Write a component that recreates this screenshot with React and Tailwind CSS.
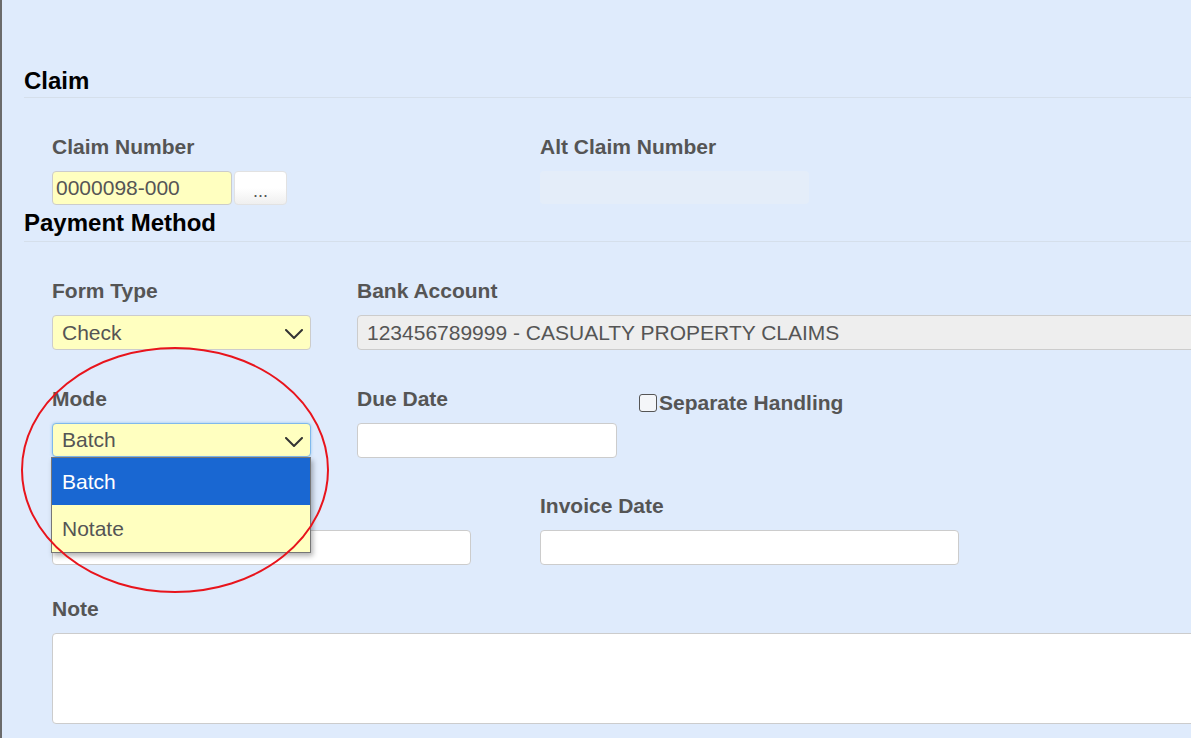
import React from "react";

const Chevron = () => (
  <svg width="18" height="10" viewBox="0 0 18 10" className="absolute right-[7px] top-[13px]" fill="none">
    <polyline points="1,1 9,9 17,1" stroke="#333" strokeWidth="2" strokeLinecap="round" strokeLinejoin="round" />
  </svg>
);

const Label = ({ children, className = "" }) => (
  <div className={"text-[21px] leading-[21px] font-bold text-[#555] mb-[14px] whitespace-nowrap " + className}>{children}</div>
);

export default function App() {
  return (
    <div
      className="relative h-[738px] w-full overflow-hidden bg-[#dfebfc] border-l-2 border-[#6b6b6b]"
      style={{ fontFamily: '"Liberation Sans", Arial, sans-serif' }}
    >
      <div className="w-[1500px] pl-[22px] pt-[69px]">
        {/* Claim heading */}
        <div className="text-[24px] leading-[24px] font-bold text-black pb-[4px] border-b border-[#d5dfeb]">Claim</div>

        {/* Claim row */}
        <div className="flex pl-[28px] mt-[38px]">
          <div className="w-[488px]">
            <Label>Claim Number</Label>
            <div className="flex gap-[2px]">
              <div className="w-[180px] h-[34px] rounded-[4px] border border-[#cccccc] bg-[#ffffc0] text-[21px] leading-[32px] text-[#555] pl-[3px]">0000098-000</div>
              <div className="w-[53px] h-[34px] rounded-[4px] border border-[#e2e2e2] bg-gradient-to-b from-white from-50% to-[#efefef] text-[18px] leading-[38px] text-[#555] text-center">...</div>
            </div>
          </div>
          <div>
            <Label>Alt Claim Number</Label>
            <div className="w-[269px] h-[33px] rounded-[4px] bg-[#e4edf9]"></div>
          </div>
        </div>

        {/* Payment Method heading */}
        <div className="mt-[6px] text-[24px] leading-[24px] font-bold text-black pb-[6px] border-b border-[#d5dfeb]">Payment Method</div>

        {/* Form Type / Bank Account */}
        <div className="flex pl-[28px] mt-[38px]">
          <div className="w-[305px]">
            <Label>Form Type</Label>
            <div className="relative w-[259px] h-[35px] rounded-[4px] border border-[#cccccc] bg-[#ffffc0] text-[21px] leading-[33px] text-[#555] pl-[9px]">
              Check
              <Chevron />
            </div>
          </div>
          <div>
            <Label>Bank Account</Label>
            <div className="w-[1000px] h-[35px] rounded-[4px] border border-[#cccccc] bg-[#eeeeee] text-[21px] leading-[33px] text-[#555] pl-[9px] whitespace-nowrap">
              123456789999 - CASUALTY PROPERTY CLAIMS
            </div>
          </div>
        </div>

        {/* Mode / Due Date / Separate Handling */}
        <div className="flex pl-[28px] mt-[38px]">
          <div className="w-[305px] relative">
            <Label>Mode</Label>
            <div className="relative w-[259px] h-[34px] rounded-[4px] border border-[#7fb8ec] bg-[#ffffc0] text-[21px] leading-[32px] text-[#555] pl-[9px] shadow-[0_0_3px_rgba(102,175,233,0.6)]">
              Batch
              <Chevron />
            </div>
          </div>
          <div className="w-[282px]">
            <Label>Due Date</Label>
            <div className="w-[260px] h-[35px] rounded-[4px] border border-[#cccccc] bg-white"></div>
          </div>
          <div className="flex items-center h-[21px] mt-[4px]">
            <span className="w-[18px] h-[18px] rounded-[3px] border border-[#555] bg-[#f4f6f9] mr-[2px] shrink-0"></span>
            <span className="text-[21px] leading-[21px] font-bold text-[#555] whitespace-nowrap">Separate Handling</span>
          </div>
        </div>

        {/* Invoice Number / Invoice Date */}
        <div className="flex pl-[28px] mt-[37px]">
          <div className="w-[488px]">
            <Label>Invoice Number</Label>
            <div className="w-[419px] h-[35px] rounded-[4px] border border-[#cccccc] bg-white"></div>
          </div>
          <div>
            <Label>Invoice Date</Label>
            <div className="w-[419px] h-[35px] rounded-[4px] border border-[#cccccc] bg-white"></div>
          </div>
        </div>

        {/* Note */}
        <div className="pl-[28px] mt-[33px]">
          <Label>Note</Label>
          <div className="w-[1300px] h-[91px] rounded-[4px] border border-[#cccccc] bg-white"></div>
        </div>
      </div>

      {/* Open dropdown list */}
      <div className="absolute left-[49px] top-[457px] w-[260px] border border-[#767676] bg-[#ffffc0] shadow-[2px_3px_5px_rgba(0,0,0,0.3)]">
        <div className="h-[47px] bg-[#1967d2] text-white text-[21px] leading-[47px] pl-[10px]">Batch</div>
        <div className="h-[47px] text-[#555] text-[21px] leading-[47px] pl-[10px]">Notate</div>
      </div>

      {/* Red annotation ellipse */}
      <svg className="absolute left-0 top-0 pointer-events-none" width="1191" height="738">
        <ellipse cx="173" cy="470" rx="153" ry="122" fill="none" stroke="#e8141c" strokeWidth="2" />
      </svg>
    </div>
  );
}
